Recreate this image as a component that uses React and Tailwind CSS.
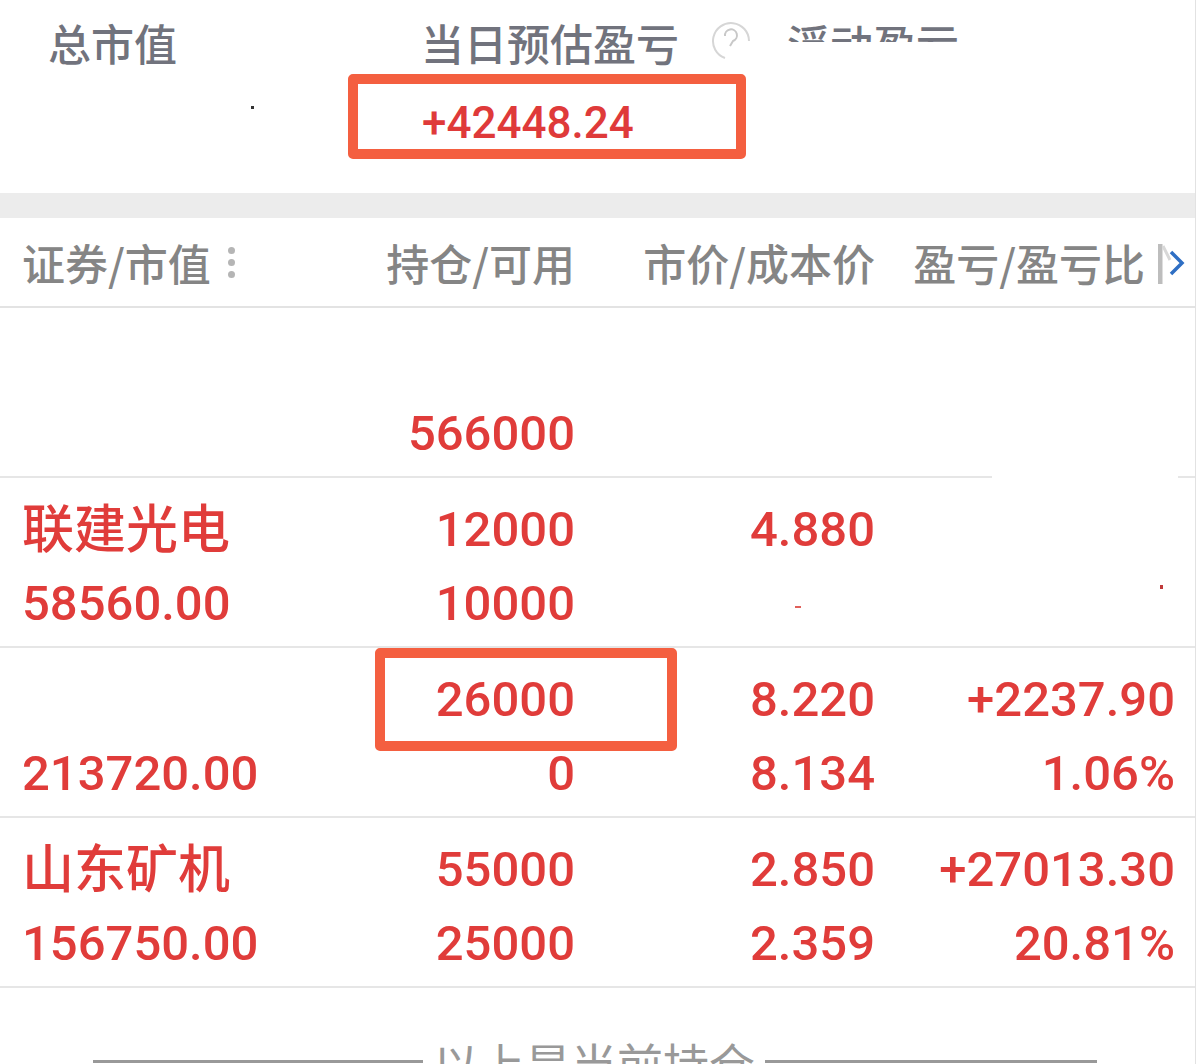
const NUM = "font-['Roboto',sans-serif] font-medium";
const CJK = "font-['Noto_Sans_CJK_SC',sans-serif]";

const rows = [
  { name: "", value: "566000", a: "", b: "", c: "", d: "", e: "", f: "", first: true },
  { name: "联建光电", value: "58560.00", a: "12000", b: "10000", c: "4.880", d: "", e: "", f: "" },
  { name: "", value: "213720.00", a: "26000", b: "0", c: "8.220", d: "8.134", e: "+2237.90", f: "1.06%" },
  { name: "山东矿机", value: "156750.00", a: "55000", b: "25000", c: "2.850", d: "2.359", e: "+27013.30", f: "20.81%" },
];

const Cell = ({ top, bottom }) => (
  <div className={`flex flex-col items-end text-[49px] leading-[74px] text-[#e03c3a] ${NUM}`}>
    <div className="h-[74px]">{top}</div>
    <div className="h-[74px]">{bottom}</div>
  </div>
);

const Row = ({ row }) => (
  <div className="grid h-[170px] grid-cols-[253px_300px_300px_300px] border-b-2 border-[#e6e6e6] pl-[22px] pt-[15px]">
    <div className="flex flex-col text-[50px] leading-[74px] text-[#e03c3a]">
      <div className={`-mt-[4px] h-[78px] text-[52px] font-medium leading-[74px] ${CJK}`}>{row.name}</div>
      <div className={`h-[74px] text-[49px] ${NUM}`}>{row.first ? "" : row.value}</div>
    </div>
    <Cell top={row.a} bottom={row.first ? row.value : row.b} />
    <Cell top={row.c} bottom={row.d} />
    <Cell top={row.e} bottom={row.f} />
  </div>
);

export default function App() {
  return (
    <div className={`relative h-[1064px] w-[1196px] overflow-hidden border-r border-[#e2e2e2] bg-white ${CJK}`}>
      {/* summary */}
      <div className="h-[193px] pt-[14px]">
        <div className="flex items-start text-[43px] font-medium leading-[56px] text-[#71737d]">
          <div className="ml-[48px] w-[373px]">总市值</div>
          <div>当日预估盈亏</div>
          <svg className="ml-[32px] mt-[8px]" width="40" height="40" viewBox="0 0 40 40" fill="none">
            <path d="M38 19 A18 18 0 1 0 14 36" stroke="#d6d6d6" strokeWidth="2" />
            <path d="M14 14 A6 6 0 1 1 22 19 L19 24" stroke="#c8c8c8" strokeWidth="2" />
          </svg>
          <div className="ml-[36px] mt-[11px] h-[17px] overflow-hidden whitespace-nowrap text-[43px] leading-[36px]">浮动盈亏</div>
        </div>
        <div className={`ml-[422px] mt-[25px] text-[44px] leading-[56px] text-[#df3a3a] ${NUM}`}>+42448.24</div>
      </div>
      <div className="h-[25px] bg-[#ececec]" />

      {/* table header */}
      <div className="grid h-[90px] grid-cols-[253px_300px_300px_300px] items-center border-b-2 border-[#e3e3e3] pl-[22px] text-[43px] font-medium text-[#858585]">
        <div className="flex items-center">
          证券/市值
          <div className="ml-[17px] flex flex-col gap-[5px]">
            <span className="h-[7px] w-[7px] rounded-full bg-[#b5b5b5]" />
            <span className="h-[7px] w-[7px] rounded-full bg-[#b5b5b5]" />
            <span className="h-[7px] w-[7px] rounded-full bg-[#b5b5b5]" />
          </div>
        </div>
        <div className="text-right">持仓/可用</div>
        <div className="text-right">市价/成本价</div>
        <div className="flex items-center justify-end whitespace-nowrap pr-[30px]">
          盈亏/盈亏比
        </div>
      </div>

      {rows.map((row, i) => (
        <Row key={i} row={row} />
      ))}

      {/* footer */}
      <div className="flex items-start pl-[93px] pt-[46px]">
        <span className="mt-[26px] h-[3px] w-[330px] bg-[#999999]" />
        <span className="mx-[10px] text-[46px] leading-[56px] text-[#999999]">以上是当前持仓</span>
        <span className="mt-[26px] h-[3px] w-[332px] bg-[#999999]" />
      </div>

      {/* overlays */}
      <div className="absolute left-[348px] top-[74px] h-[85px] w-[398px] rounded-[5px] border-[10px] border-[#f45f40]" />
      <div className="absolute left-[375px] top-[648px] h-[103px] w-[302px] rounded-[5px] border-[10px] border-[#f45f40]" />
      <div className="absolute left-[992px] top-[470px] h-[10px] w-[186px] bg-white" />
      <div className="absolute left-[251px] top-[106px] h-[3px] w-[3px] bg-[#333333]" />
      <div className="absolute left-[795px] top-[606px] h-[2px] w-[6px] bg-[#e0605a]" />
      <div className="absolute left-[1160px] top-[585px] h-[4px] w-[3px] bg-[#c0393a]" />
      <svg className="absolute left-[1158px] top-[242px]" width="32" height="44" viewBox="0 0 32 44" fill="none">
        <path d="M2 2 L2 42" stroke="#bdbdbd" strokeWidth="5" />
        <path d="M5 4 L12 18" stroke="#d8d8d8" strokeWidth="3" />
        <path d="M13 10 L24 21 L13 32" stroke="#2f6fc4" strokeWidth="3.5" />
      </svg>
    </div>
  );
}
